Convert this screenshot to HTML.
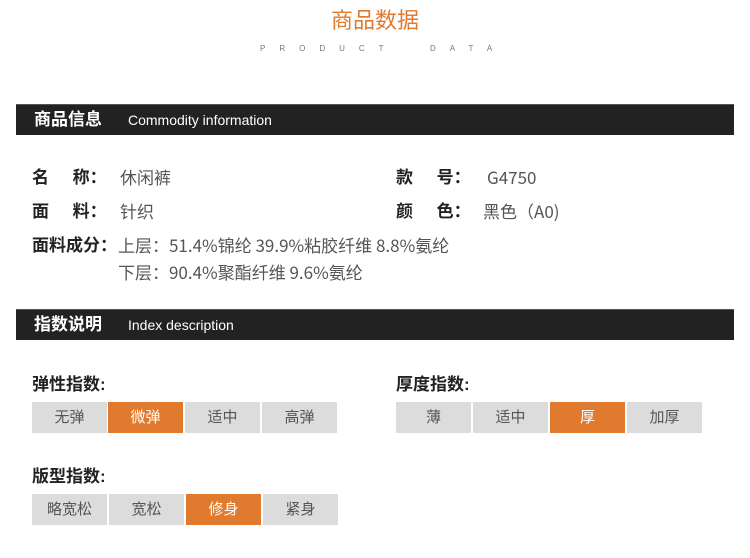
<!DOCTYPE html>
<html><head><meta charset="utf-8"><style>
*{margin:0;padding:0;box-sizing:border-box}
body{width:750px;height:558px;background:#fff;position:relative;font-family:"Liberation Sans","Noto Sans CJK SC",sans-serif;overflow:hidden}
.a{position:absolute;white-space:nowrap;line-height:22px}
.t{left:0;width:750px;text-align:center;top:8px;font-size:22px;color:#e07a2e;line-height:26px}
.s{left:260px;top:44px;font-size:8px;color:#777;letter-spacing:14px;line-height:10px}
.bar{position:absolute;left:16px;width:718px;height:31px;background:#222;border-top:1px solid #555;color:#fff}
.bar .c{position:absolute;left:18px;top:2px;font-size:17px;line-height:26px;font-weight:bold}
.bar .e{position:absolute;left:112px;top:5px;font-size:14px;line-height:20px}
.l{font-size:17px;font-weight:bold;color:#222}
.v{font-size:17px;color:#555;font-family:"Noto Sans CJK SC",sans-serif}
.b{position:absolute;width:75px;height:31px;background:#dcdcdc;color:#555;font-size:15px;text-align:center;line-height:31px}
.o{background:#e07a2e;color:#fff}
</style></head><body>
<div class="a t">商品数据</div>
<div class="a s">PRODUCT&nbsp;&nbsp;DATA</div>
<div class="bar" style="top:104px"><span class="c">商品信息</span><span class="e">Commodity information</span></div>
<div class="a l" style="left:32px;top:167px">名&nbsp;&nbsp;&nbsp;&nbsp;&nbsp;称：</div><div class="a v" style="left:120px;top:166px">休闲裤</div>
<div class="a l" style="left:396px;top:167px">款&nbsp;&nbsp;&nbsp;&nbsp;&nbsp;号：</div><div class="a v" style="left:487px;top:166px">G4750</div>
<div class="a l" style="left:32px;top:201px">面&nbsp;&nbsp;&nbsp;&nbsp;&nbsp;料：</div><div class="a v" style="left:120px;top:200px">针织</div>
<div class="a l" style="left:396px;top:201px">颜&nbsp;&nbsp;&nbsp;&nbsp;&nbsp;色：</div><div class="a v" style="left:483px;top:200px">黑色（A0)</div>
<div class="a l" style="left:32px;top:235px">面料成分：</div><div class="a v" style="left:118px;top:234px">上层：51.4%锦纶 39.9%粘胶纤维 8.8%氨纶</div>
<div class="a v" style="left:118px;top:261px">下层：90.4%聚酯纤维 9.6%氨纶</div>
<div class="bar" style="top:309px"><span class="c">指数说明</span><span class="e">Index description</span></div>
<div class="a l" style="left:32px;top:374px">弹性指数:</div>
<div class="a l" style="left:396px;top:374px">厚度指数:</div>
<div class="a l" style="left:32px;top:466px">版型指数:</div>
<div class="b" style="left:32px;top:402px">无弹</div><div class="b o" style="left:108px;top:402px">微弹</div><div class="b" style="left:185px;top:402px">适中</div><div class="b" style="left:262px;top:402px">高弹</div>
<div class="b" style="left:396px;top:402px">薄</div><div class="b" style="left:473px;top:402px">适中</div><div class="b o" style="left:550px;top:402px">厚</div><div class="b" style="left:627px;top:402px">加厚</div>
<div class="b" style="left:32px;top:494px">略宽松</div><div class="b" style="left:109px;top:494px">宽松</div><div class="b o" style="left:186px;top:494px">修身</div><div class="b" style="left:263px;top:494px">紧身</div>
</body></html>
